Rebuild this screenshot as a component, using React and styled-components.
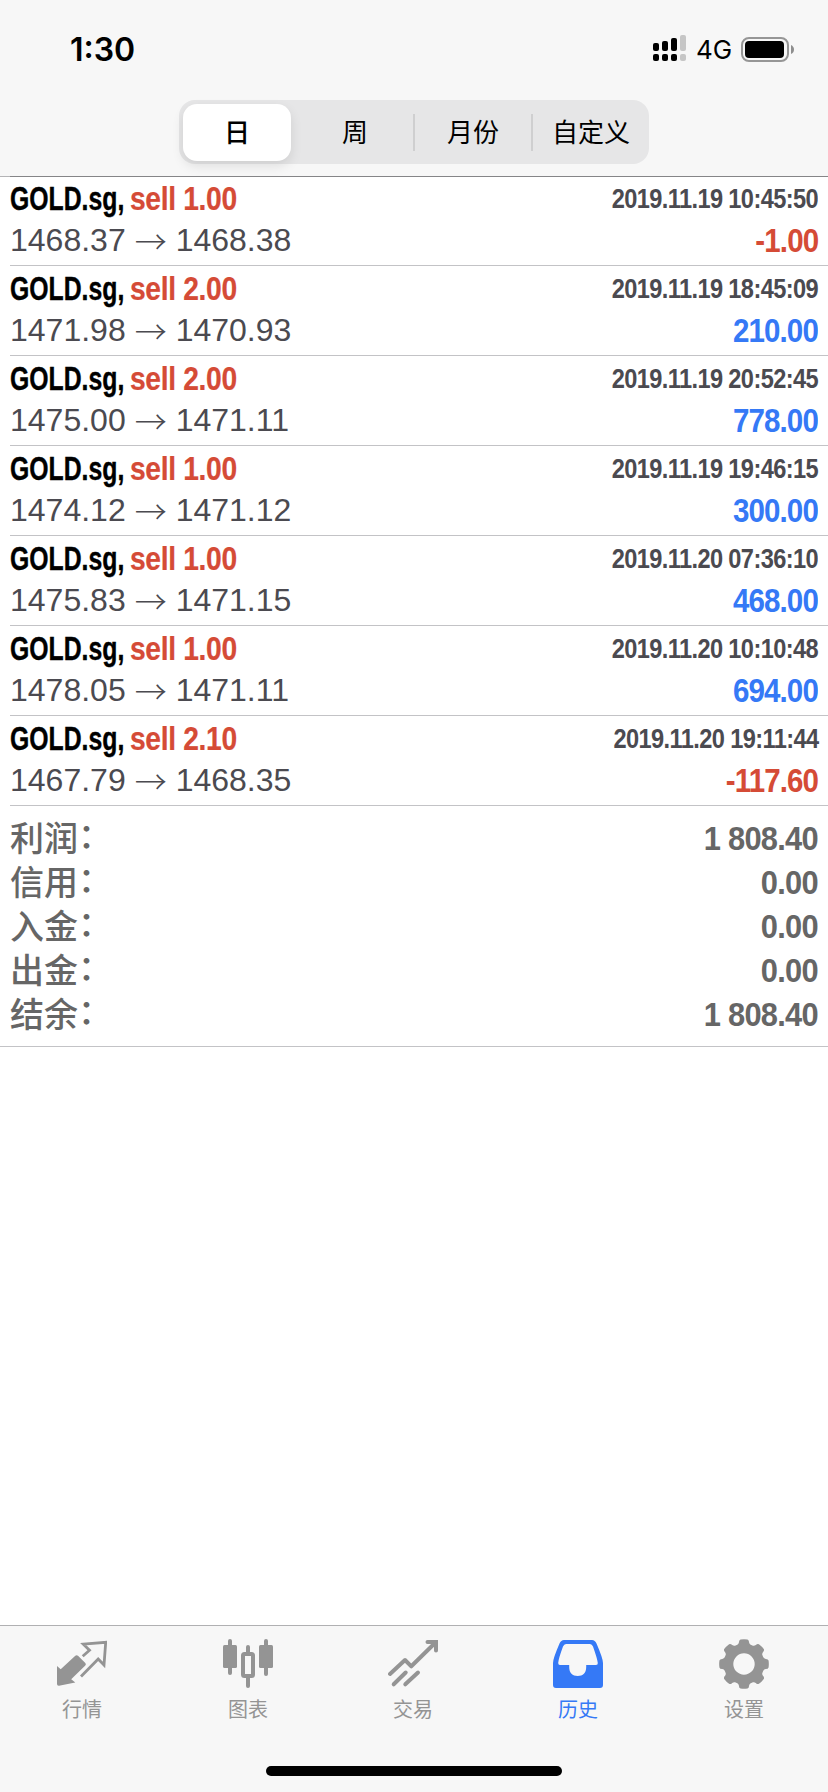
import React from 'react';
import styled, { createGlobalStyle } from 'styled-components';

const GlobalStyle = createGlobalStyle`
  * { box-sizing: border-box; }
  body { margin: 0; background: #fff; }
`;

const sans = '"Liberation Sans", "Noto Sans CJK SC", sans-serif';
const RED = '#d54b36';
const BLUE = '#3579f6';

const Screen = styled.div`
  display: flex;
  flex-direction: column;
  width: 828px;
  height: 1792px;
  overflow: hidden;
  background: #fff;
  font-family: ${sans};
`;

const Header = styled.header`
  height: 177px;
  flex: none;
  background: #f7f7f7;
  border-bottom: 1px solid #b4b4b6;
`;

const StatusBar = styled.div`
  display: flex;
  justify-content: space-between;
  height: 100px;
  padding: 30px 34px 0 70px;
  font-family: Inter, sans-serif;
  color: #000;
`;

const Clock = styled.div`
  font-size: 32px;
  font-weight: 600;
  line-height: 40px;
`;

const Indicators = styled.div`
  display: flex;
  align-items: flex-start;
  height: 40px;
`;

const Network = styled.span`
  width: 55px;
  padding-left: 10px;
  font-size: 26px;
  line-height: 40px;
  white-space: nowrap;
`;

const Segments = styled.div`
  display: grid;
  grid-template-columns: 118px 118px 118px 116px;
  width: 470px;
  height: 64px;
  margin-left: 179px;
  border-radius: 16px;
  background: #e6e6e7;
`;

const Segment = styled.div`
  display: flex;
  align-items: center;
  justify-content: center;
  margin: ${(p) => (p.$active ? '4px 6px 4px 4px' : '14px 0')};
  border-radius: ${(p) => (p.$active ? '14px' : '0')};
  background: ${(p) => (p.$active ? '#fff' : 'transparent')};
  box-shadow: ${(p) => (p.$active ? '0 5px 12px rgba(0,0,0,.1)' : 'none')};
  border-right: ${(p) => (p.$divider ? '2px solid #cfcfd0' : 'none')};
  padding-top: 1px;
  font: ${(p) => (p.$active ? 500 : 400)} 26px/36px ${sans};
  color: #000;
`;

const Deals = styled.div`
  margin-top: -1px;
  padding-left: 10px;
`;

const Deal = styled.div`
  height: 90px;
  padding: 1px 10px 0 0;
  border-bottom: 1px solid #c3c3c6;
  &:first-child {
    padding-top: 0;
    border-top: 1px solid #858587;
  }
`;

const Line = styled.div`
  display: flex;
  align-items: flex-start;
  justify-content: space-between;
  height: ${(p) => p.$h}px;
  line-height: ${(p) => p.$h}px;
  white-space: nowrap;
`;

const Condensed = styled.span`
  display: inline-block;
  font-weight: 700;
  font-size: ${(p) => p.$size}px;
  letter-spacing: ${(p) => p.$tracking ?? -1}px;
  color: ${(p) => p.$color};
  -webkit-text-stroke: ${(p) => p.$stroke || 0}px currentColor;
  transform: scaleX(${(p) => p.$scale});
  transform-origin: ${(p) => p.$from || 'right'} center;
`;

const Title = styled.span`
  display: grid;
  grid-template-columns: 120px auto;
`;

const Prices = styled.span`
  display: flex;
  font-size: 32px;
  line-height: 38px;
  color: #4b4a50;
`;

const Arrow = styled.span`
  width: 50px;
  text-align: center;
  font-family: "Noto Sans CJK SC", sans-serif;
  font-weight: 300;
`;

const Summary = styled.section`
  padding: 11px 10px 0;
  height: 241px;
  border-bottom: 1px solid #c3c3c6;
  color: #666;
`;

const Label = styled.span`
  font: 500 34px/44px ${sans};
`;

const Amount = styled(Condensed)`
  line-height: 42px;
`;

const Colon = styled.span`
  position: relative;
  top: -3px;
`;

const Spacer = styled.div`
  flex: 1;
`;

const TabBar = styled.nav`
  display: grid;
  grid-template-columns: 164px 168px 162px 168px 164px;
  flex: none;
  height: 141px;
  border-top: 1px solid #b0b0b2;
  background: #f7f7f7;
`;

const Tab = styled.div`
  display: flex;
  flex-direction: column;
  align-items: center;
  padding-top: 13px;
  color: ${(p) => (p.$active ? BLUE : '#949494')};
  font: 400 20px/28px ${sans};
  svg { display: block; flex: none; margin-bottom: 7px; }
`;

const HomeArea = styled.div`
  display: flex;
  justify-content: center;
  flex: none;
  height: 26px;
  background: #f7f7f7;
`;

const HomeIndicator = styled.div`
  width: 296px;
  height: 10px;
  border-radius: 5px;
  background: #000;
`;

const Signal = () => (
  <svg width="33" height="40" viewBox="0 0 33 40">
    {[[0, 13], [9, 11], [18, 8], [27, 5]].map(([x, y]) => (
      <g key={x} fill={x === 27 ? '#c6c6c6' : '#000'}>
        <rect x={x} y={y} width="6" height={21 - y} rx="2" />
        <rect x={x} y="24" width="6" height="7" rx="2" />
      </g>
    ))}
  </svg>
);

const Battery = () => (
  <svg width="53" height="40" viewBox="0 0 53 40">
    <rect x="1" y="8" width="46" height="23" rx="7" fill="none" stroke="#969696" strokeWidth="2" />
    <rect x="4" y="11" width="39" height="17" rx="4" fill="#000" />
    <path d="M50 15q3 1.5 3 4.5t-3 4.5z" fill="#8e8e8e" />
  </svg>
);

const Icon = ({ children }) => (
  <svg width="50" height="50" viewBox="0 0 50 50" fill="currentColor">{children}</svg>
);

const QuotesIcon = () => (
  <Icon>
    <path d="M0 27L3.7 30.3L18.3 16.8Q19.7 15.5 21 16.8L28.3 24Q29.5 25.3 28.3 26.6L14.2 40.3L18.3 43.5L2 46.8Q0 47 0 45Z" />
    <path d="M25.7 17.2L32.5 11.2L26.3 5.2L48.7 3.3L47 26L41.2 20L24 37.6" fill="none" stroke="currentColor" strokeWidth="2.8" />
  </Icon>
);

const ChartIcon = () => (
  <Icon>
    <rect x="5" y="0" width="4" height="36" rx="2" />
    <rect x="0" y="6" width="14" height="23" rx="1.5" />
    <rect x="41" y="0" width="4" height="37" rx="2" />
    <rect x="36" y="6" width="14" height="23" rx="1.5" />
    <rect x="23" y="6" width="4" height="9" rx="2" />
    <rect x="23" y="37" width="4" height="12" rx="2" />
    <rect x="20" y="15" width="10" height="22" rx="1.5" fill="none" stroke="currentColor" strokeWidth="4" />
  </Icon>
);

const TradeIcon = () => (
  <Icon>
    <g fill="none" stroke="currentColor" strokeWidth="4" strokeLinecap="round" strokeLinejoin="round">
      <path d="M2 35L17 21L23.3 27.3L47 4" />
      <path d="M39.5 3H48V11.5" strokeLinejoin="miter" />
      <path d="M5.7 45.3L17.7 33.5M17.3 45.3L30 33.5" />
    </g>
  </Icon>
);

const HistoryIcon = () => (
  <Icon>
    <path
      fillRule="evenodd"
      d="M0 24Q0 19.5 6.5 4.5Q8 1 11 1H39Q42 1 43.5 4.5Q50 19.5 50 24V46Q50 49 47 49H3Q0 49 0 46ZM13 5Q11 5 10 7.5Q5.4 20 5.2 24Q5.2 26 7 26H16.2V28C16.2 34 19.5 37 24.7 37C30 37 33.2 34 33.2 28V26H43Q45 26 44.8 24Q44.4 20 40 7.5Q39 5 37 5Z"
    />
  </Icon>
);

const gearPath = (() => {
  const at = (r, deg) => {
    const a = (deg * Math.PI) / 180;
    return `${(25 + r * Math.sin(a)).toFixed(2)} ${(25 - r * Math.cos(a)).toFixed(2)}`;
  };
  let d = '';
  for (let i = 0; i < 8; i += 1) {
    const a = i * 45;
    d += `${i ? 'L' : 'M'}${at(22.3, a - 13)}Q${at(24.6, a - 12)} ${at(24.8, a - 8)}Q${at(25.1, a)} ${at(24.8, a + 8)}`;
    d += `Q${at(24.6, a + 12)} ${at(22.3, a + 13)}Q${at(20.7, a + 15)} ${at(20.4, a + 19)}L${at(20.4, a + 26)}Q${at(20.7, a + 30)} ${at(22.3, a + 32)}`;
  }
  return `${d}ZM14.3 25a10.7 10.7 0 1 0 21.4 0a10.7 10.7 0 1 0 -21.4 0Z`;
})();

const SettingsIcon = () => (
  <Icon><path fillRule="evenodd" d={gearPath} /></Icon>
);

const deals = [
  ['1.00', '2019.11.19 10:45:50', '1468.37', '1468.38', '-1.00'],
  ['2.00', '2019.11.19 18:45:09', '1471.98', '1470.93', '210.00'],
  ['2.00', '2019.11.19 20:52:45', '1475.00', '1471.11', '778.00'],
  ['1.00', '2019.11.19 19:46:15', '1474.12', '1471.12', '300.00'],
  ['1.00', '2019.11.20 07:36:10', '1475.83', '1471.15', '468.00'],
  ['1.00', '2019.11.20 10:10:48', '1478.05', '1471.11', '694.00'],
  ['2.10', '2019.11.20 19:11:44', '1467.79', '1468.35', '-117.60'],
];

const totals = [
  ['利润', '1 808.40'],
  ['信用', '0.00'],
  ['入金', '0.00'],
  ['出金', '0.00'],
  ['结余', '1 808.40'],
];

const tabs = [
  ['行情', QuotesIcon],
  ['图表', ChartIcon],
  ['交易', TradeIcon],
  ['历史', HistoryIcon],
  ['设置', SettingsIcon],
];

export default function App() {
  return (
    <Screen>
      <GlobalStyle />
      <Header>
        <StatusBar>
          <Clock>1:30</Clock>
          <Indicators>
            <Signal />
            <Network>4G</Network>
            <Battery />
          </Indicators>
        </StatusBar>
        <Segments>
          <Segment $active>日</Segment>
          <Segment $divider>周</Segment>
          <Segment $divider>月份</Segment>
          <Segment>自定义</Segment>
        </Segments>
      </Header>
      <Deals>
        {deals.map(([volume, time, open, close, profit]) => (
          <Deal key={time}>
            <Line $h={44}>
              <Title>
                <Condensed $size={33} $tracking={0} $scale={0.751} $stroke={0.4} $from="left" $color="#000">GOLD.sg,</Condensed>
                <Condensed $size={33} $tracking={-0.4} $scale={0.855} $stroke={0.2} $from="left" $color={RED}>sell {volume}</Condensed>
              </Title>
              <Condensed $size={27} $tracking={-0.7} $scale={0.874} $color="#4b4a50">{time}</Condensed>
            </Line>
            <Line $h={40}>
              <Prices>
                <span>{open}</span>
                <Arrow>→</Arrow>
                <span>{close}</span>
              </Prices>
              <Condensed $size={33} $scale={0.895} $color={profit[0] === '-' ? RED : BLUE}>{profit}</Condensed>
            </Line>
          </Deal>
        ))}
      </Deals>
      <Summary>
        {totals.map(([label, value]) => (
          <Line key={label} $h={44}>
            <Label>{label}<Colon>：</Colon></Label>
            <Amount $size={34} $tracking={-0.8} $scale={0.907} $color="#666">{value}</Amount>
          </Line>
        ))}
      </Summary>
      <Spacer />
      <TabBar>
        {tabs.map(([label, TabIcon]) => (
          <Tab key={label} $active={label === '历史'}>
            <TabIcon />
            {label}
          </Tab>
        ))}
      </TabBar>
      <HomeArea><HomeIndicator /></HomeArea>
    </Screen>
  );
}
